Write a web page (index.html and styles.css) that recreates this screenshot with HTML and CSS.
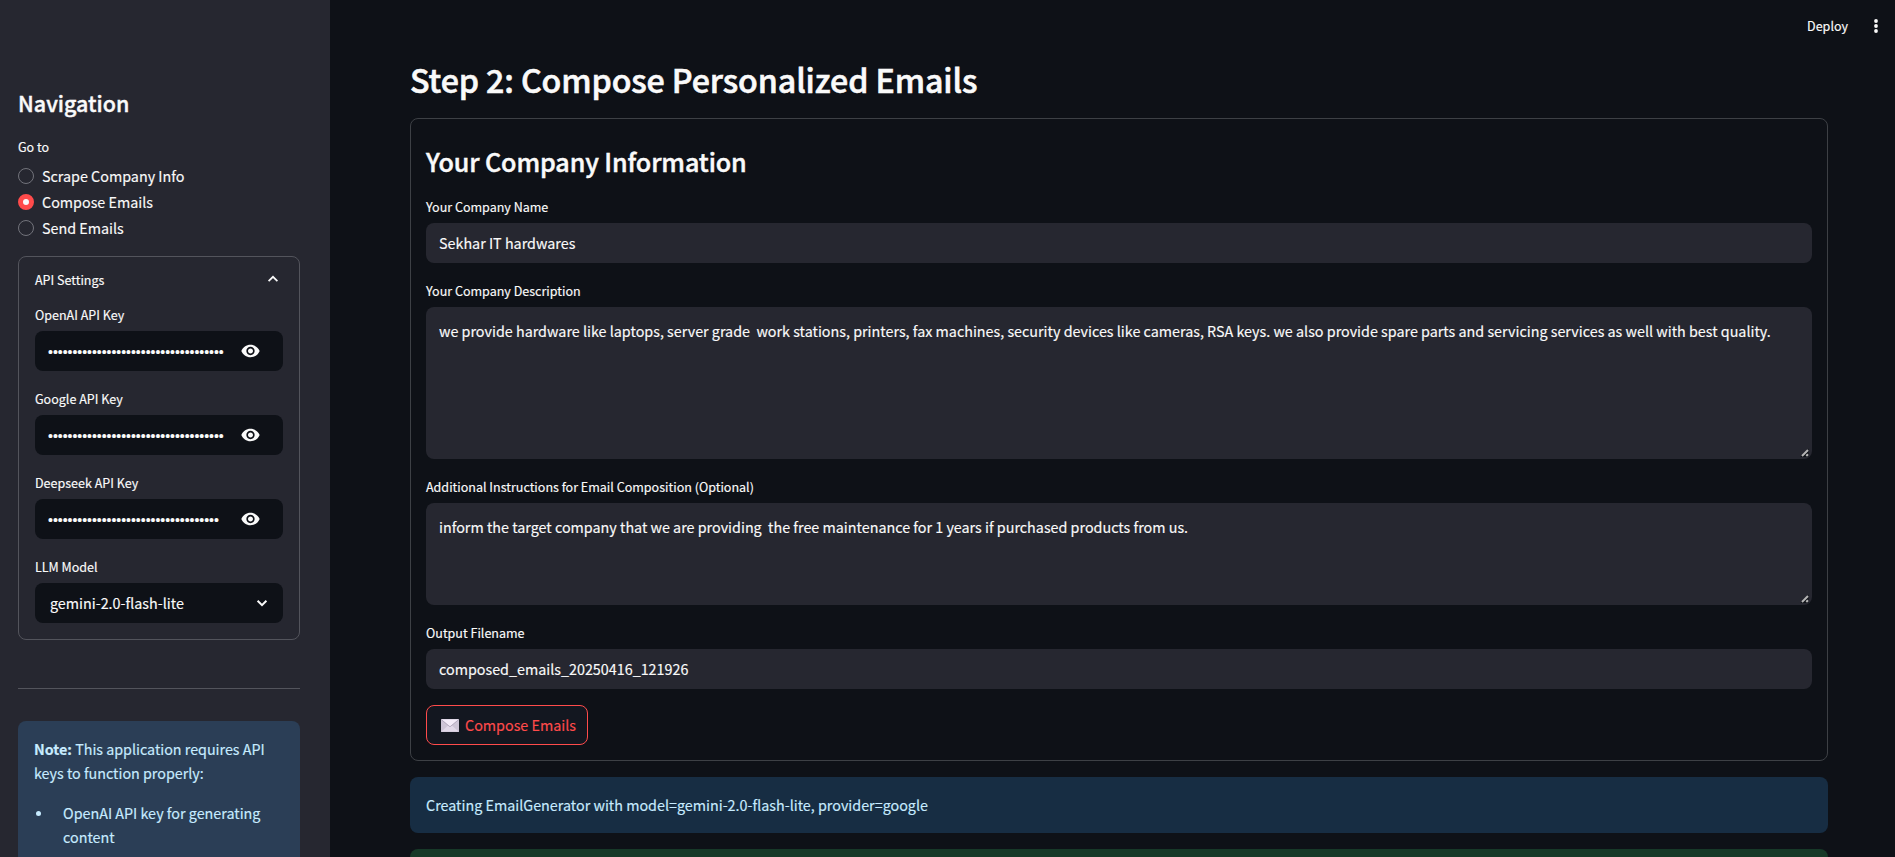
FILE: index.html
```
<!DOCTYPE html>
<html lang="en">
<head>
<meta charset="utf-8">
<title>Compose Personalized Emails</title>
<link rel="stylesheet" href="styles.css">
</head>
<body>
<svg class="defs" width="0" height="0">
  <symbol id="eye" viewBox="0 0 24 24"><path d="M12 4.5C7 4.5 2.73 7.61 1 12c1.73 4.39 6 7.5 11 7.5s9.27-3.11 11-7.5c-1.73-4.39-6-7.5-11-7.5zM12 17c-2.76 0-5-2.24-5-5s2.24-5 5-5 5 2.24 5 5-2.24 5-5 5zm0-8c-1.66 0-3 1.34-3 3s1.34 3 3 3 3-1.34 3-3-1.34-3-3-3z"/></symbol>
  <symbol id="grip" viewBox="0 0 10 10"><path d="M0.5 8.5 8.5 0.5V9H1z" fill="#0e1117"/><path d="M2 8 8 2M6.3 8 8 6.3" stroke="#b4b4b4" stroke-width="2"/></symbol>
</svg>
<div class="app">
  <aside class="sidebar">
    <h2 class="nav-title">Navigation</h2>
    <div class="label goto">Go to</div>
    <div class="radios">
      <div class="radio"><i class="dot"></i><span>Scrape Company Info</span></div>
      <div class="radio"><i class="dot on"></i><span>Compose Emails</span></div>
      <div class="radio"><i class="dot"></i><span>Send Emails</span></div>
    </div>
    <section class="expander">
      <div class="summary"><span>API Settings</span>
        <svg width="12" height="8" viewBox="0 0 12 8"><path d="M1.6 6.2 6 1.8l4.4 4.4" fill="none" stroke="#fafafa" stroke-width="1.7"/></svg>
      </div>
      <div class="field"><div class="label">OpenAI API Key</div><div class="input"><span class="secret">••••••••••••••••••••••••••••••••••••</span><svg class="eye"><use href="#eye"/></svg></div></div>
      <div class="field"><div class="label">Google API Key</div><div class="input"><span class="secret">••••••••••••••••••••••••••••••••••••</span><svg class="eye"><use href="#eye"/></svg></div></div>
      <div class="field"><div class="label">Deepseek API Key</div><div class="input"><span class="secret">•••••••••••••••••••••••••••••••••••</span><svg class="eye"><use href="#eye"/></svg></div></div>
      <div class="field"><div class="label">LLM Model</div><div class="input select"><span>gemini-2.0-flash-lite</span>
        <svg width="12" height="8" viewBox="0 0 12 8"><path d="M1.6 1.8 6 6.2l4.4-4.4" fill="none" stroke="#fafafa" stroke-width="2"/></svg></div></div>
    </section>
    <hr class="rule">
    <div class="note">
      <p><b>Note:</b> This application requires API<br>keys to function properly:</p>
      <ul><li>OpenAI API key for generating<br>content</li></ul>
    </div>
  </aside>
  <main class="main">
    <header class="toolbar"><span>Deploy</span>
      <svg width="4" height="14" viewBox="0 0 4 14" fill="#fafafa"><circle cx="2" cy="2" r="1.9"/><circle cx="2" cy="7" r="1.9"/><circle cx="2" cy="12" r="1.9"/></svg>
    </header>
    <h1 class="title">Step 2: Compose Personalized Emails</h1>
    <section class="card">
      <h2 class="card-title">Your Company Information</h2>
      <div class="field"><div class="label">Your Company Name</div><div class="input"><span>Sekhar IT hardwares</span></div></div>
      <div class="field"><div class="label">Your Company Description</div><div class="input area tall"><span>we provide hardware like laptops, server grade  work stations, printers, fax machines, security devices like cameras, RSA keys. we also provide spare parts and servicing services as well with best quality.</span><svg class="grip"><use href="#grip"/></svg></div></div>
      <div class="field"><div class="label">Additional Instructions for Email Composition (Optional)</div><div class="input area short"><span>inform the target company that we are providing  the free maintenance for 1 years if purchased products from us.</span><svg class="grip"><use href="#grip"/></svg></div></div>
      <div class="field"><div class="label">Output Filename</div><div class="input"><span>composed_emails_20250416_121926</span></div></div>
      <button class="button">
        <svg width="18" height="13" viewBox="0 0 18 13"><rect width="18" height="13" rx="0.6" fill="#cdc4d6"/><path d="M0.5 12.5 7 6.5h4l6.5 6z" fill="#e1d8e8"/><path d="M0.5 0.5h17L9 7.6z" fill="#f3ebf8"/><path d="M0.5 0.8 9 7.8l8.5-7" fill="none" stroke="#a99fb5" stroke-width="0.8"/></svg>
        <span>Compose Emails</span>
      </button>
    </section>
    <div class="alert info">Creating EmailGenerator with model=gemini-2.0-flash-lite, provider=google</div>
    <div class="alert success"></div>
  </main>
</div>
</body>
</html>
```
FILE: styles.css
```
* { box-sizing: border-box; }
body {
  margin: 0;
  background: #0e1117;
  color: #fafafa;
  font-family: "Noto Sans CJK SC", "Noto Sans", sans-serif;
  font-size: 14.33px;
  line-height: 24px;
  -webkit-text-stroke: 0.15px currentColor;
  overflow: hidden;
}
h1, h2, p, ul { margin: 0; padding: 0; }
.defs { position: absolute; }
.app { display: flex; height: 857px; overflow: hidden; }

.sidebar { width: 330px; flex: none; background: #262730; padding: 83px 30px 0 18px; overflow: hidden; }
.nav-title { font-size: 21.5px; line-height: 40px; font-weight: 500; -webkit-text-stroke: 0.4px #fafafa; }
.label { font-size: 12.53px; line-height: 24px; height: 28px; white-space: nowrap; }
.goto { margin-top: 12px; }
.radios { display: flex; flex-direction: column; gap: 2px; margin-top: 1px; }
.radio { display: flex; align-items: center; gap: 8px; height: 24px; }
.dot { width: 16px; height: 16px; border-radius: 50%; border: 1px solid #72737b; }
.dot.on { background: #fafafa; border: 5px solid #ff4b4b; }

.expander { margin-top: 16px; height: 384px; border: 1px solid #53545c; border-radius: 8px; padding: 11px 16px 0; }
.summary { display: flex; align-items: center; justify-content: space-between; height: 24px; padding-right: 4px; margin-bottom: 11px; font-size: 12.53px; }
.summary svg { margin-bottom: 2px; }
.field { margin-bottom: 16px; }
.input { display: flex; align-items: center; height: 40px; padding: 0 13px; border-radius: 8px; white-space: pre; background: #262730; }
.sidebar .input { background: #0e1117; justify-content: space-between; }
.secret { font-family: "Liberation Sans", sans-serif; font-size: 14px; letter-spacing: -0.02px; padding-top: 2px; }
.eye { width: 21px; height: 20px; fill: #fafafa; margin-right: 9px; }
.sidebar .select { padding: 0 15px; }
.rule { height: 1px; margin: 48px 0 32px; border: 0; background: #53545c; }
.note { height: 200px; border-radius: 8px; background: #2b3e56; color: #c7ebff; padding: 16px; white-space: nowrap; }
.note p { letter-spacing: -0.02px; }
.note ul { margin-top: 16px; list-style: none; }
.note li { display: flex; gap: 22px; }
.note li::before { content: ""; width: 5px; height: 5px; flex: none; margin: 10px 0 0 2px; border-radius: 50%; background: #c7ebff; }

.main { flex: 1; padding: 0 67px 0 80px; }
.toolbar { display: flex; align-items: center; justify-content: flex-end; gap: 26px; height: 52px; margin-right: -50px; font-size: 12.53px; }
.title { height: 66px; font-size: 32.2px; line-height: 55px; font-weight: 500; letter-spacing: -0.11px; white-space: nowrap; -webkit-text-stroke: 0.6px #fafafa; }
.card { height: 643px; border: 1px solid #3d4045; border-radius: 8px; padding: 15px; }
.card-title { height: 61px; font-size: 25.1px; line-height: 54px; font-weight: 500; letter-spacing: -0.1px; white-space: nowrap; -webkit-text-stroke: 0.45px #fafafa; }
.area { align-items: flex-start; padding-top: 12px; position: relative; }
.tall { height: 152px; }
.short { height: 102px; }
.grip { position: absolute; right: 2px; bottom: 1px; width: 10px; height: 10px; }
.button { display: flex; align-items: center; gap: 6px; width: 162px; height: 40px; padding: 0 0 0 14px; border: 1px solid #ff4b4b; border-radius: 8px; background: #131720; color: #ff4b4b; font: inherit; white-space: nowrap; }
.button svg { flex: none; }
.alert { height: 56px; margin-top: 16px; padding: 16px; border-radius: 8px; }
.info { background: #172d43; color: #c7ebff; }
.success { background: #173928; }
```
